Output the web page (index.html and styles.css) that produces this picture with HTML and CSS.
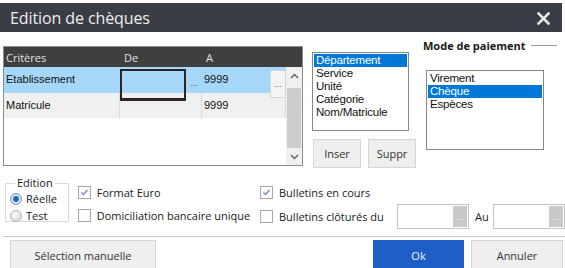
FILE: index.html
```html
<!DOCTYPE html>
<html lang="fr">
<head>
  <meta charset="UTF-8">
  <title>Edition de chèques</title>
  <link rel="stylesheet" href="styles.css">
</head>
<body>
  <div class="window">
    <div class="titlebar">
      <span class="title">Edition de chèques</span>
      <svg class="close" width="13" height="13" viewBox="0 0 13 13">
        <path d="M1.5 1.5 L11.5 11.5 M11.5 1.5 L1.5 11.5" stroke="#e8e8e8" stroke-width="2.6" stroke-linecap="square"/>
      </svg>
    </div>

    <div class="main">
      <!-- Criteria grid -->
      <div class="grid">
        <div class="grid-head">
          <span>Critères</span>
          <span>De</span>
          <span>A</span>
        </div>
        <div class="grid-body">
          <div class="rows">
            <div class="row selected">
              <div class="cell">Etablissement</div>
              <div class="cell edit">
                <span class="value current"></span>
                <span class="dots">...</span>
              </div>
              <div class="cell edit">
                <span class="value">9999</span>
                <span class="dots">...</span>
              </div>
            </div>
            <div class="row">
              <div class="cell">Matricule</div>
              <div class="cell"></div>
              <div class="cell">9999</div>
            </div>
          </div>
          <div class="scrollbar">
            <div class="arrow up">
              <svg width="9" height="6" viewBox="0 0 9 6"><path d="M1 5 L4.5 1.5 L8 5" fill="none" stroke="#606060" stroke-width="1.4"/></svg>
            </div>
            <div class="thumb"></div>
            <div class="arrow">
              <svg width="9" height="6" viewBox="0 0 9 6"><path d="M1 1 L4.5 4.5 L8 1" fill="none" stroke="#606060" stroke-width="1.4"/></svg>
            </div>
          </div>
        </div>
      </div>

      <!-- Sort fields -->
      <div class="criteria">
        <div class="listbox sort-list">
          <div class="item active">Département</div>
          <div class="item">Service</div>
          <div class="item">Unité</div>
          <div class="item">Catégorie</div>
          <div class="item">Nom/Matricule</div>
        </div>
        <div class="small-buttons">
          <button class="btn btn-small">Inser</button>
          <button class="btn btn-small">Suppr</button>
        </div>
      </div>

      <!-- Payment mode -->
      <div class="payment">
        <div class="group-label">Mode de paiement <span class="rule"></span></div>
        <div class="listbox pay-list">
          <div class="item">Virement</div>
          <div class="item active">Chèque</div>
          <div class="item">Espèces</div>
        </div>
      </div>
    </div>

    <div class="options">
      <fieldset class="edition">
        <legend>Edition</legend>
        <label class="radio-row"><span class="radio checked"></span>Réelle</label>
        <label class="radio-row"><span class="radio"></span>Test</label>
      </fieldset>

      <div class="checks col-1">
        <label class="check-row"><span class="checkbox checked"></span>Format Euro</label>
        <label class="check-row"><span class="checkbox"></span>Domiciliation bancaire unique</label>
      </div>

      <div class="checks col-2">
        <label class="check-row"><span class="checkbox checked"></span>Bulletins en cours</label>
        <div class="check-row date-row">
          <span class="checkbox"></span>
          <span class="date-label">Bulletins clôturés du</span>
          <div class="date-input"><span class="date-btn">...</span></div>
          <span class="au">Au</span>
          <div class="date-input"><span class="date-btn">...</span></div>
        </div>
      </div>
    </div>

    <div class="separator"></div>

    <div class="actions">
      <button class="btn btn-manual">Sélection manuelle</button>
      <button class="btn btn-primary">Ok</button>
      <button class="btn btn-cancel">Annuler</button>
    </div>
  </div>
</body>
</html>
```

FILE: styles.css
```css
* {
  box-sizing: border-box;
}

body {
  margin: 0;
  background: #ffffff;
  font-family: 'Open Sans', 'Noto Sans', sans-serif;
  font-size: 11px;
  color: #1a1a1a;
  overflow: hidden;
}

.window {
  width: 565px;
  height: 268px;
}

.titlebar {
  margin-top: 3px;
  width: 562px;
  height: 29px;
  background: #3b3d46;
  display: flex;
  align-items: center;
  justify-content: space-between;
  padding: 0 12px 0 10px;
}

.title {
  color: #eeeeee;
  font-size: 16px;
  letter-spacing: -0.1px;
}

.close {
  margin-top: 1px;
}

.main {
  display: flex;
  align-items: flex-start;
  padding: 6px 0 0 3px;
  height: 144px;
}

/* grid */

.grid {
  margin-top: 8px;
  width: 300px;
  height: 120px;
  border: 1px solid #8c8c8c;
  display: flex;
  flex-direction: column;
}

.grid-head {
  height: 20px;
  background: #3f3f3f;
  color: #e2e2e2;
  display: grid;
  grid-template-columns: 116px 82px 1fr;
  align-items: center;
}

.grid-head span {
  padding-left: 2px;
  font-size: 11px;
}

.grid-head span:nth-child(2),
.grid-head span:nth-child(3) {
  padding-left: 4px;
}

.grid-body {
  flex: 1;
  display: flex;
}

.rows {
  flex: 1;
}

.row {
  height: 25px;
  display: grid;
  grid-template-columns: 116px 82px 84px;
  background: #f0f0f0;
  font-family: 'Liberation Sans', Arial, sans-serif;
  font-size: 11px;
  color: #111111;
}

.row.selected {
  height: 26px;
  background: #a6d7f8;
}

.cell {
  border-right: 1px solid #dcdcdc;
  padding: 6px 0 0 2px;
  display: flex;
  align-items: flex-start;
}

.row.selected .cell {
  border-right: none;
}

.cell.edit {
  padding: 0;
  align-items: stretch;
}

.value {
  flex: 1;
  padding: 6px 0 0 2px;
}

.value.current {
  border: 2px solid #2b2420;
  border-bottom-width: 3px;
  margin-top: 2px;
  margin-bottom: -1px;
}

.dots {
  width: 16px;
  margin: 3px 0 2px 0;
  background: #f4f4f4;
  border: 1px solid #d4d4d4;
  color: #555555;
  font-size: 9px;
  text-align: center;
  line-height: 26px;
}

.row.selected .cell:nth-child(2) .dots {
  background: transparent;
  border: none;
}

.scrollbar {
  width: 17px;
  display: flex;
  flex-direction: column;
  background: #f0f0f0;
}

.arrow {
  height: 17px;
  display: flex;
  align-items: center;
  justify-content: center;
}

.arrow.up {
  height: 21px;
  align-items: flex-start;
  padding-top: 6px;
}

.thumb {
  flex: 1;
  margin: 0 1px;
  background: #cdcdcd;
}

/* list boxes */

.listbox {
  border: 1px solid #828790;
  background: #ffffff;
  padding: 1px;
  font-family: 'Liberation Sans', Arial, sans-serif;
  font-size: 11.5px;
  color: #111111;
}

.item {
  height: 13px;
  line-height: 13px;
  padding-left: 2px;
  letter-spacing: -0.2px;
}

.item.active {
  background: #0078d7;
  color: #ffffff;
}

.criteria {
  margin: 14px 0 0 9px;
}

.sort-list {
  width: 97px;
  height: 79px;
}

.small-buttons {
  display: flex;
  gap: 7px;
  margin-top: 8px;
  margin-left: 1px;
}

.btn {
  font-family: 'Open Sans', 'Noto Sans', sans-serif;
  font-size: 11px;
  color: #333333;
  background: #efefef;
  border: 1px solid #d6d6d6;
  padding: 0;
  cursor: pointer;
}

.btn-small {
  width: 48px;
  height: 29px;
}

.payment {
  margin-left: 7px;
}

.group-label {
  display: flex;
  align-items: center;
  height: 14px;
  font-weight: bold;
  font-size: 11px;
  color: #1a1a1a;
  white-space: nowrap;
}

.rule {
  display: inline-block;
  width: 26px;
  height: 1px;
  margin-left: 5px;
  background: #9a9a9a;
}

.pay-list {
  margin: 18px 0 0 3px;
  width: 118px;
  height: 80px;
}

/* options */

.options {
  display: flex;
  align-items: flex-start;
  height: 53px;
  padding-left: 5px;
}

.edition {
  margin: 0;
  width: 64px;
  height: 46px;
  padding: 0 0 0 4px;
  border: 1px solid #dadada;
  font-size: 11px;
}

.edition legend {
  padding: 0 2px;
  margin-left: 5px;
  line-height: 14px;
}

.radio-row {
  display: flex;
  align-items: center;
  gap: 4px;
  height: 17px;
}

.radio {
  width: 12px;
  height: 12px;
  border-radius: 50%;
  border: 1px solid #b4b4b4;
  background: radial-gradient(circle at 40% 35%, #fafafa, #d2d2d2);
}

.radio.checked {
  border-color: #6f8fb0;
  background: radial-gradient(circle, #1c5c96 0, #2a73b8 2.5px, #cfe0f0 3.5px, #e9f1f9 6px);
}

.checks {
  display: flex;
  flex-direction: column;
  margin-top: 7px;
}

.col-1 {
  margin-left: 9px;
  width: 183px;
  gap: 5px;
}

.col-2 {
  gap: 3px;
}

.check-row {
  display: flex;
  align-items: center;
  gap: 6px;
  height: 18px;
  white-space: nowrap;
}

.checkbox {
  width: 13px;
  height: 13px;
  border: 1px solid #a9a9a9;
  background: #ffffff;
  flex: none;
}

.checkbox.checked {
  background: #ffffff url("data:image/svg+xml,%3Csvg xmlns='http://www.w3.org/2000/svg' width='11' height='11'%3E%3Cpath d='M2.5 5.5 L4.5 7.5 L8.5 3' fill='none' stroke='%236b8ec4' stroke-width='1.4'/%3E%3C/svg%3E") center no-repeat;
}

.date-row {
  height: 25px;
}

.date-label {
  width: 112px;
}

.date-input {
  width: 72px;
  height: 25px;
  border: 1px solid #c4c4c4;
  display: flex;
  justify-content: flex-end;
  flex: none;
}

.date-btn {
  width: 14px;
  margin: 1px;
  background: #c9c9c9;
  color: #f5f5f5;
  font-size: 9px;
  text-align: center;
  line-height: 22px;
}

.au {
  width: 13px;
  margin-right: -1px;
}

.separator {
  margin: 7px 0 0 3px;
  height: 1px;
  background: #c8c8c8;
}

.actions {
  display: flex;
  margin-top: 3px;
  padding-left: 10px;
}

.btn-manual {
  width: 146px;
  height: 30px;
}

.btn-primary {
  margin-left: auto;
  width: 91px;
  height: 30px;
  background: #1e5ec6;
  border-color: #1e5ec6;
  color: #eef3fb;
}

.btn-cancel {
  margin-left: 7px;
  margin-right: 2px;
  width: 92px;
  height: 30px;
}
```
